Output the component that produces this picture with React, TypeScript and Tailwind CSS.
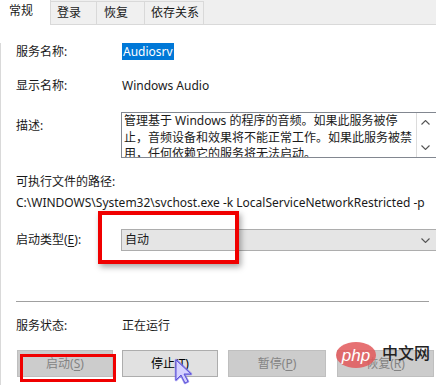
import * as React from 'react'

const font = { fontFamily: '"Noto Sans", "Noto Sans CJK SC", sans-serif' }

function Chevron({ up = false, className = '' }: { up?: boolean; className?: string }) {
  return (
    <svg width="9" height="5" viewBox="0 0 9 5" className={className}>
      <path d={up ? 'M0.5 4.5 L4.5 0.5 L8.5 4.5' : 'M0.5 0.5 L4.5 4.5 L8.5 0.5'} fill="none" stroke="#555" strokeWidth="1.1" />
    </svg>
  )
}

function Btn({ label, hot, disabled, w }: { label: string; hot: string; disabled?: boolean; w: string }) {
  return (
    <div
      className={`flex h-[27px] ${w} items-center justify-center border text-[12px] ${
        disabled ? 'border-[#bfbfbf] bg-[#cccccc] text-[#838383]' : 'border-[#adadad] bg-[#e1e1e1] text-black'
      }`}
    >
      {label}(<span className="underline underline-offset-2">{hot}</span>)
    </div>
  )
}

export default function App() {
  return (
    <div className="relative h-[385px] w-[436px] overflow-hidden bg-white text-[12px] text-[#1a1a1a]" style={font}>
      {/* tab strip */}
      <div className="flex h-[25px] items-end border-b border-[#d9d9d9] bg-[#efefef]">
        <div className="relative -mb-px flex h-[25px] w-[51px] items-start border-r border-[#d9d9d9] bg-white pl-[9px] pt-[2px]">常规</div>
        <div className="flex h-[23px] w-[46px] items-center border-r border-t border-[#d9d9d9] bg-[#f0f0f0] pl-[6px]">登录</div>
        <div className="flex h-[23px] w-[48px] items-center border-r border-t border-[#d9d9d9] bg-[#f0f0f0] pl-[7px]">恢复</div>
        <div className="flex h-[23px] w-[59px] items-center border-r border-t border-[#d9d9d9] bg-[#f0f0f0] pl-[6px]">依存关系</div>
      </div>

      <div className="h-[360px] border-l border-[#d9d9d9] pl-[15px]">
        <div className="mt-[18px] flex h-[17px] items-center">
          <span className="w-[106px]">服务名称:</span>
          <span className="flex h-[17px] items-center bg-[#0078d7] px-[1px] text-white">Audiosrv</span>
        </div>
        <div className="mt-[17px] flex h-[17px] items-center">
          <span className="w-[106px]">显示名称:</span>
          <span>Windows Audio</span>
        </div>
        <div className="mt-[18px] flex">
          <span className="mt-[5px] w-[105px]">描述:</span>
          <div className="flex h-[46px] flex-1 border-y border-l border-[#828790]">
            <div className="w-[295px] border-r border-[#dcdcdc] pl-[2px] leading-[16.5px] whitespace-nowrap overflow-hidden">
              <div>管理基于 Windows 的程序的音频。如果此服务被停</div>
              <div>止，音频设备和效果将不能正常工作。如果此服务被禁</div>
              <div>用，任何依赖它的服务将无法启动。</div>
            </div>
            <div className="flex w-[16px] flex-col items-center justify-between py-[7px]">
              <Chevron up />
              <Chevron />
            </div>
          </div>
        </div>
        <div className="mt-[15px] flex h-[17px] items-center">可执行文件的路径:</div>
        <div className="mt-[4px] flex h-[17px] items-center whitespace-nowrap">
          C:\WINDOWS\System32\svchost.exe -k LocalServiceNetworkRestricted -p
        </div>
        <div className="mt-[18px] flex h-[22px] items-center">
          <span className="w-[105px]">
            启动类型(<span className="underline underline-offset-2">E</span>):
          </span>
          <div className="flex h-[22px] flex-1 items-center justify-between border-y border-l border-[#adadad] bg-[#e5e5e5] pl-[3px] pr-[6px]">
            <span>自动</span>
            <Chevron />
          </div>
        </div>
        <div className="mr-[7px] mt-[50px] border-t border-[#a0a0a0]" />
        <div className="mt-[15px] flex h-[17px] items-center">
          <span className="w-[106px]">服务状态:</span>
          <span>正在运行</span>
        </div>
        <div className="mt-[16px] flex gap-[9px] pl-[1px]">
          <Btn label="启动" hot="S" disabled w="w-[96px]" />
          <Btn label="停止" hot="T" w="w-[96px]" />
          <div className="pl-[1px]">
            <Btn label="暂停" hot="P" disabled w="w-[98px]" />
          </div>
          <div className="pl-[2px]">
            <Btn label="恢复" hot="R" disabled w="w-[97px]" />
          </div>
        </div>
      </div>

      {/* annotation boxes */}
      <div className="absolute left-[98px] top-[211px] h-[53px] w-[141px] border-[4px] border-[#f00000] shadow-[2px_3px_6px_rgba(0,0,0,0.35)]" />
      <div className="absolute left-[20px] top-[354px] h-[28px] w-[96px] border-[3px] border-[#f00000]" />

      {/* watermark */}
      <div className="absolute left-[336px] top-[342px] flex items-center gap-[6px]">
        <div className="flex h-[26px] w-[40px] items-center justify-center rounded-[50%] bg-[#e2585b]/85">
          <span className="text-[17px] italic leading-none text-white" style={{ fontFamily: '"Liberation Sans", sans-serif' }}>php</span>
        </div>
        <span className="-mt-[6px] text-[16px] font-medium text-[#222]" style={{ fontFamily: '"Noto Sans CJK SC", sans-serif' }}>中文网</span>
      </div>

      {/* cursor */}
      <svg className="absolute left-[170px] top-[358px]" width="30" height="28" viewBox="0 0 30 28">
        <path d="M6 2 L6 22 L11 17 L15 25 L18 23.5 L14 16 L21 16 Z" fill="#b9b4f5" stroke="#7b72e8" strokeWidth="2.5" strokeLinejoin="round" opacity="0.75" />
        <path d="M6 2 L6 22 L11 17 L15 25 L18 23.5 L14 16 L21 16 Z" fill="#d6d2ff" stroke="#5b50d8" strokeWidth="1" strokeLinejoin="round" />
      </svg>
    </div>
  )
}
